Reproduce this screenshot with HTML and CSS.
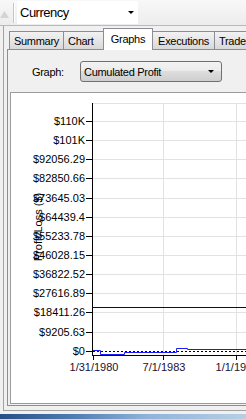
FILE: index.html
```html
<!DOCTYPE html>
<html lang="en">
<head>
  <meta charset="UTF-8" />
  <title>Graphs</title>
  <link rel="stylesheet" href="styles.css">
</head>
<body>
  <div class="toolbar">
    <svg class="tool-icon" width="9" height="9" viewBox="0 0 9 9"><path d="M0 8 L4.5 1 L9 8 Z" fill="#d4d4d4"/></svg>
    <div class="tool-sep"></div>
    <div class="combo-top">
      <span>Currency</span>
      <span class="arrow"></span>
    </div>
  </div>

  <div class="dock">
    <div class="tabrow">
      <div class="tab tab-summary">Summary</div>
      <div class="tab tab-chart">Chart</div>
      <div class="tab tab-graphs active">Graphs</div>
      <div class="tab tab-exec">Executions</div>
      <div class="tab tab-trades">Trades</div>
    </div>

    <div class="tabpage">
      <div class="graph-row">
        <span class="graph-label">Graph:</span>
        <div class="combo">
          <span>Cumulated Profit</span>
          <span class="arrow"></span>
        </div>
      </div>

      <div class="chart-frame">
        <svg class="plot" width="300" height="310" viewBox="11 93 300 310">
          <!-- grid -->
          <g stroke="#e2e2e2" stroke-width="1">
            <line x1="92" y1="103.5" x2="311" y2="103.5"/>
            <line x1="92" y1="121.5" x2="311" y2="121.5"/>
            <line x1="92" y1="140.5" x2="311" y2="140.5"/>
            <line x1="92" y1="159.5" x2="311" y2="159.5"/>
            <line x1="92" y1="178.5" x2="311" y2="178.5"/>
            <line x1="92" y1="198.5" x2="311" y2="198.5"/>
            <line x1="92" y1="217.5" x2="311" y2="217.5"/>
            <line x1="92" y1="236.5" x2="311" y2="236.5"/>
            <line x1="92" y1="255.5" x2="311" y2="255.5"/>
            <line x1="92" y1="274.5" x2="311" y2="274.5"/>
            <line x1="92" y1="293.5" x2="311" y2="293.5"/>
            <line x1="92" y1="312.5" x2="311" y2="312.5"/>
            <line x1="92" y1="332.5" x2="311" y2="332.5"/>
            <line x1="163.5" y1="103" x2="163.5" y2="355"/>
            <line x1="236.5" y1="103" x2="236.5" y2="355"/>
          </g>

          <!-- axes -->
          <g stroke="#000" stroke-width="1">
            <line x1="92.5" y1="103" x2="92.5" y2="356"/>
            <line x1="92" y1="355.5" x2="311" y2="355.5"/>
            <line x1="86" y1="121.5" x2="92" y2="121.5"/>
            <line x1="86" y1="140.5" x2="92" y2="140.5"/>
            <line x1="86" y1="159.5" x2="92" y2="159.5"/>
            <line x1="86" y1="178.5" x2="92" y2="178.5"/>
            <line x1="86" y1="198.5" x2="92" y2="198.5"/>
            <line x1="86" y1="217.5" x2="92" y2="217.5"/>
            <line x1="86" y1="236.5" x2="92" y2="236.5"/>
            <line x1="86" y1="255.5" x2="92" y2="255.5"/>
            <line x1="86" y1="274.5" x2="92" y2="274.5"/>
            <line x1="86" y1="293.5" x2="92" y2="293.5"/>
            <line x1="86" y1="312.5" x2="92" y2="312.5"/>
            <line x1="86" y1="332.5" x2="92" y2="332.5"/>
            <line x1="86" y1="351.5" x2="92" y2="351.5"/>
            <line x1="93.5" y1="355" x2="93.5" y2="360"/>
            <line x1="163.5" y1="355" x2="163.5" y2="360"/>
            <line x1="236.5" y1="355" x2="236.5" y2="360"/>
          </g>

          <!-- y labels -->
          <g class="ylabels" text-anchor="end">
            <text x="85" y="125">$110K</text>
            <text x="85" y="144">$101K</text>
            <text x="85" y="163">$92056.29</text>
            <text x="85" y="182">$82850.66</text>
            <text x="85" y="202">$73645.03</text>
            <text x="85" y="221">$64439.4</text>
            <text x="85" y="240">$55233.78</text>
            <text x="85" y="259">$46028.15</text>
            <text x="85" y="278">$36822.52</text>
            <text x="85" y="297">$27616.89</text>
            <text x="85" y="316">$18411.26</text>
            <text x="85" y="336">$9205.63</text>
            <text x="85" y="355">$0</text>
          </g>
          <text class="ytitle" x="42" y="227" text-anchor="middle" transform="rotate(-90 42 227)">Profit/Loss ($)</text>

          <!-- x labels -->
          <g class="xlabels" text-anchor="middle">
            <text x="94" y="371">1/31/1980</text>
            <text x="164" y="371">7/1/1983</text>
            <text x="237" y="371">1/1/1987</text>
          </g>

          <!-- series -->
          <line x1="92" y1="307.5" x2="311" y2="307.5" stroke="#000090" stroke-width="1"/>
          <line x1="93" y1="351.5" x2="311" y2="351.5" stroke="#000" stroke-width="1" stroke-dasharray="2 2"/>
          <polyline fill="none" stroke="#1a1aff" stroke-width="1"
            points="93,350.5 100.5,350.5 100.5,354.5 124.5,354.5 124.5,352.5 176.5,352.5 176.5,348.5 187.5,348.5 187.5,349.5 311,349.5"/>
        </svg>
      </div>
    </div>
  </div>

  <div class="taskbar"></div>
</body>
</html>
```
FILE: styles.css
```css
body {
  margin: 0;
  padding: 0;
  width: 246px;
  height: 419px;
  overflow: hidden;
  background: #f0f0f0;
  font-family: 'Liberation Sans', Arial, sans-serif;
  font-size: 11px;
  color: #000;
}

.toolbar {
  height: 24px;
  padding-top: 1px;
  display: flex;
  align-items: stretch;
  background: linear-gradient(#f8f8f8, #ececec);
  border-top: 1px solid #d2d2d2;
  border-bottom: 1px solid #b9b9b9;
  box-sizing: content-box;
  margin-top: -1px;
}

.tool-icon {
  align-self: center;
  margin-left: 0;
  margin-top: 2px;
}

.tool-sep {
  width: 1px;
  margin: 2px 2px 2px 4px;
  background: #c4c4c4;
  border-right: 1px solid #fff;
}

.combo-top {
  width: 121px;
  height: 23px;
  background: #fff;
  display: flex;
  align-items: center;
  justify-content: space-between;
  padding: 0 4px 0 3px;
  box-sizing: border-box;
  font-size: 13px;
  letter-spacing: -0.5px;
}

.arrow {
  width: 0;
  height: 0;
  border-left: 3px solid transparent;
  border-right: 3px solid transparent;
  border-top: 3px solid #000;
}

.dock {
  width: 400px;
  margin-left: 3px;
  border-left: 1px solid #a3a3a3;
  border-bottom: 1px solid #a3a3a3;
  padding: 0 0 4px 3px;
}

.tabrow {
  height: 23px;
  display: flex;
  align-items: flex-end;
  padding-left: 2px;
}

.tab {
  box-sizing: border-box;
  height: 18px;
  border: 1px solid #8b8e96;
  border-bottom: none;
  margin-right: -1px;
  background: linear-gradient(#f2f2f2, #e6e6e6 50%, #d9d9d9);
  text-align: center;
  line-height: 18px;
  letter-spacing: -0.3px;
  white-space: nowrap;
  overflow: hidden;
}

.tab.active {
  position: relative;
  z-index: 1;
  height: 22px;
  margin-bottom: -1px;
  background: #fff;
  line-height: 20px;
}

.tab-summary { width: 55px; }
.tab-chart { width: 41px; text-align: left; padding-left: 4px; }
.tab-graphs { width: 50px; }
.tab-exec { width: 63px; }
.tab-trades { width: 60px; text-align: left; padding-left: 4px; }

.tabpage {
  border: 1px solid #8b8e96;
  padding: 11px 0 1px 2px;
  background: #f0f0f0;
}

.graph-row {
  height: 21px;
  display: flex;
  align-items: center;
  padding-left: 22px;
}

.graph-label {
  width: 48px;
  letter-spacing: -0.3px;
}

.combo {
  box-sizing: border-box;
  width: 142px;
  height: 21px;
  border: 1px solid #707070;
  border-radius: 3px;
  background: linear-gradient(#f3f3f3, #ebebeb 50%, #dddddd 50%, #cfcfcf);
  display: flex;
  align-items: center;
  justify-content: space-between;
  padding: 0 7px 0 3px;
  letter-spacing: -0.3px;
}

.chart-frame {
  margin-top: 10px;
  height: 310px;
  border: 1px solid #9c9c9c;
  border-right: none;
  background: #fff;
  overflow: hidden;
}

.plot {
  display: block;
}

.ylabels text,
.xlabels text,
.ytitle {
  font-family: 'Liberation Sans', Arial, sans-serif;
  font-size: 11px;
  fill: #000;
}

.xlabels text {
  fill: #1c1030;
}

.taskbar {
  margin-top: 3px;
  height: 10px;
  background: linear-gradient(to right, #244f86, #4d7db3 30%, #8fb4d9 60%, #b6cfe6);
}
```
